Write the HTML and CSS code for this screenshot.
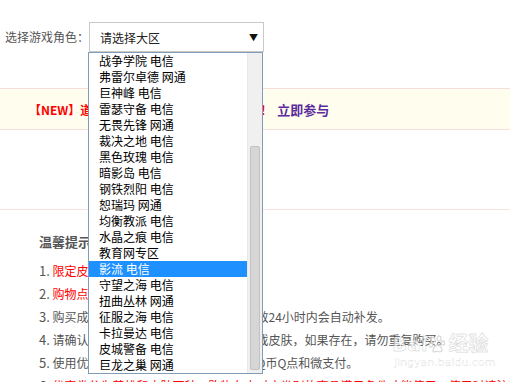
FILE: index.html
```html
<!DOCTYPE html>
<html lang="zh-CN">
<head>
    <meta charset="UTF-8">
    <meta name="viewport" content="width=device-width, initial-scale=1.0">
    <title>选择游戏角色</title>
    <link rel="stylesheet" href="styles.css">
</head>
<body>
    <div class="role-bar">
        <span class="role-label">选择游戏角色：</span>
        <div class="select-wrap">
            <div class="select-box">
                <span>请选择大区</span>
                <span class="select-arrow">▼</span>
            </div>

            <!-- opened option list -->
            <div class="drop-list">
                <ul class="options">
                    <li>战争学院 电信</li>
                    <li>弗雷尔卓德 网通</li>
                    <li>巨神峰 电信</li>
                    <li>雷瑟守备 电信</li>
                    <li>无畏先锋 网通</li>
                    <li>裁决之地 电信</li>
                    <li>黑色玫瑰 电信</li>
                    <li>暗影岛 电信</li>
                    <li>钢铁烈阳 电信</li>
                    <li>恕瑞玛 网通</li>
                    <li>均衡教派 电信</li>
                    <li>水晶之痕 电信</li>
                    <li>教育网专区</li>
                    <li class="active">影流 电信</li>
                    <li>守望之海 电信</li>
                    <li>扭曲丛林 网通</li>
                    <li>征服之海 电信</li>
                    <li>卡拉曼达 电信</li>
                    <li>皮城警备 电信</li>
                    <li>巨龙之巢 网通</li>
                </ul>
                <div class="scroll-track"><div class="scroll-thumb"></div></div>
            </div>
        </div>
    </div>

    <div class="notice-bar">
        <span class="notice-text">【NEW】道聚城皮肤折扣活动火热进行中啦！</span>
        <a class="notice-link" href="#">立即参与</a>
    </div>

    <div class="tips">
        <h3>温馨提示</h3>
        <ul class="tip-list">
            <li><span class="num">1.</span> <span class="red">限定皮肤购买后不支持退款。</span></li>
            <li><span class="num">2.</span> <span class="red">购物点券仅限本活动使用。</span></li>
            <li><span class="num">3.</span> 购买成功后，若道具未到账，系统在生效24小时内会自动补发。</li>
            <li><span class="num">4.</span> 请确认您的账号中是否已经拥有该款游戏皮肤，如果存在，请勿重复购买。</li>
            <li><span class="num">5.</span> 使用优惠券购买时，支付方式仅可支持Q币Q点和微支付。</li>
            <li><span class="num">6.</span> <span class="red">优惠券分为英雄和皮肤两种，购物车中对应类别的商品满足条件才能使用，使用时请注意。</span></li>
        </ul>
    </div>

    <div class="watermark">
        <div class="wm-logo">Bai<svg class="wm-paw" width="16" height="18" viewBox="0 0 16 18"><g fill="none" stroke="#d8d8d8" stroke-width="1.2"><ellipse cx="4" cy="5" rx="2" ry="2.6"/><ellipse cx="10" cy="3.5" rx="2" ry="2.6"/><ellipse cx="14" cy="8" rx="1.6" ry="2.2"/><ellipse cx="2" cy="10" rx="1.6" ry="2.2"/><path d="M4 16c0-4 3-6 5-6s4 3 4 5-2 2-4 1.5S4 18 4 16z"/></g></svg>经验</div>
        <div class="wm-url">jingyan.baidu.com</div>
    </div>
</body>
</html>
```

FILE: styles.css
```css
html
{
    margin: 0;
    padding: 0;
}
body
{
    margin: 0;
    background: #fff;
    color: #555;
    font-family: "Noto Sans CJK SC", "Noto Sans", sans-serif;
    font-size: 12px;
    position: relative;
    height: 382px;
    overflow: hidden;
}

/* role select row */
.role-bar
{
    display: flex;
    align-items: center;
    padding: 22px 0 0 5px;
    height: 30px;
}
.role-label
{
    line-height: 16px;
}
.select-wrap
{
    position: relative;
    z-index: 5;
}
.select-box
{
    width: 175px;
    height: 30px;
    box-sizing: border-box;
    border: 1px solid #c9c9c9;
    background: #fff;
    display: flex;
    align-items: center;
    justify-content: space-between;
    padding: 0 5px 0 10px;
    color: #222;
    font-size: 12px;
}
.select-arrow
{
    font-size: 9px;
    color: #111;
}

.drop-list
{
    position: absolute;
    top: 30px;
    left: -1px;
    width: 175px;
    box-sizing: border-box;
    border: 1px solid #7f9db9;
    background: #fff;
    display: flex;
}
.options
{
    list-style: none;
    margin: 0;
    padding: 0;
    flex: 1;
}
.options li
{
    height: 16px;
    line-height: 16px;
    padding-left: 10px;
    color: #000;
    white-space: nowrap;
}
.options li.active
{
    background: #1e90ff;
    color: #fff;
}
.scroll-track
{
    width: 15px;
    background: #f0f0f0;
    border-left: 1px solid #e8e8e8;
    box-sizing: border-box;
    padding-top: 93px;
}
.scroll-thumb
{
    margin-left: 2px;
    width: 10px;
    height: 224px;
    box-sizing: border-box;
    background: #d6d6d6;
    border: 1px solid #c2c2c2;
    border-radius: 2px;
}

/* notice bar */
.notice-bar
{
    margin-top: 36px;
    height: 40px;
    border-top: 1px solid #f7dede;
    border-bottom: 1px solid #f7dede;
    background: #fffdee;
    display: flex;
    align-items: center;
    padding-left: 29px;
    font-weight: bold;
}
.notice-text
{
    color: #f00;
}
.notice-link
{
    color: #5b2c9c;
    text-decoration: none;
    margin-left: 5px;
    font-size: 13px;
}

/* tips */
.tips
{
    margin-top: 79px;
    border-top: 1px solid #f8e2e2;
    padding-left: 39px;
}
.tips h3
{
    margin: 22px 0 7px 0;
    font-size: 13px;
    line-height: 20px;
    color: #555;
}
.tip-list
{
    list-style: none;
    margin: 0;
    padding: 0;
}
.tip-list li
{
    line-height: 23px;
    white-space: nowrap;
}
.num
{
    font-size: 13px;
}
.red
{
    color: #f00;
}

/* faint site watermark */
.watermark
{
    position: absolute;
    left: 392px;
    top: 332px;
    white-space: nowrap;
    color: rgba(255, 255, 255, 0.6);
    -webkit-text-stroke: 1px rgba(0, 0, 0, 0.13);
    font-family: "DejaVu Sans", "Noto Sans CJK SC", sans-serif;
}
.wm-logo
{
    display: flex;
    align-items: center;
    font-size: 20px;
    font-weight: bold;
    line-height: 24px;
}
.wm-paw
{
    margin: 0 4px 0 1px;
}
.wm-url
{
    font-size: 11px;
    line-height: 14px;
    -webkit-text-stroke: 0.5px rgba(0, 0, 0, 0.12);
    padding-left: 2px;
}
```
